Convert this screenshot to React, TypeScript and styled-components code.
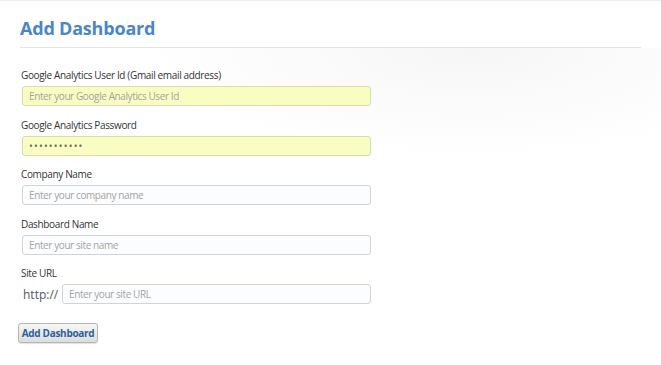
import React from 'react';
import styled, { createGlobalStyle } from 'styled-components';

const GlobalStyle = createGlobalStyle`
  html, body {
    margin: 0;
    padding: 0;
    background: #ffffff;
  }
  body {
    font-family: "Open Sans", "DejaVu Sans", sans-serif;
  }
`;

const Page = styled.div`
  width: 661px;
  height: 365px;
  box-sizing: border-box;
  border-top: 1px solid #ececec;
  padding: 0 20px;
  overflow: hidden;
`;

const Header = styled.div`
  height: 47px;
  box-sizing: border-box;
  padding-top: 15px;
  border-bottom: 1px solid #e4e4e4;
`;

const Title = styled.h1`
  margin: 0;
  font-family: "Open Sans", sans-serif;
  font-size: 18px;
  line-height: 24px;
  font-weight: 700;
  color: #4a86c6;
  letter-spacing: -0.2px;
`;

const Body = styled.form`
  margin: 0 -20px;
  padding: 18px 20px 0;
  background: radial-gradient(ellipse 330px 110px at 470px 0, rgba(0, 0, 0, 0.035), rgba(0, 0, 0, 0) 100%);
`;

const Field = styled.div`
  margin-bottom: 9.5px;
`;

const Label = styled.label`
  display: block;
  margin: 0 0 3px 1px;
  padding-top: 2px;
  font-size: 10px;
  line-height: 15px;
  letter-spacing: -0.35px;
  color: #333333;
`;

const Input = styled.input<{ $highlight?: boolean; $width?: number }>`
  display: block;
  box-sizing: border-box;
  width: ${p => p.$width ?? 349}px;
  height: 20px;
  margin-left: 2px;
  padding: 0 6px;
  border: 1px solid ${p => (p.$highlight ? '#d8dcb0' : '#cfd4db')};
  border-radius: 3px;
  background: ${p => (p.$highlight ? '#fafdc2' : '#fcfdfe')};
  font-family: "Open Sans", sans-serif;
  font-size: 10px;
  letter-spacing: -0.4px;
  color: #555;
  outline: none;

  &::placeholder {
    color: #a3a3a3;
  }

  &[type='password'] {
    font-size: 10px;
    letter-spacing: 1.2px;
    color: #666;
  }
`;

const UrlRow = styled.div`
  display: flex;
  align-items: center;
`;

const Prefix = styled.span`
  width: 40px;
  box-sizing: border-box;
  padding-left: 3px;
  font-size: 12px;
  color: #555555;
`;

const Button = styled.button`
  display: block;
  margin-top: 19px;
  margin-left: -2px;
  height: 20px;
  width: 80px;
  padding: 0;
  border: 1px solid #b5b5b5;
  border-radius: 3px;
  background: linear-gradient(#f7f7f7, #dcdcdc);
  box-shadow: 0 1px 1px rgba(0, 0, 0, 0.12);
  font-family: "Open Sans", sans-serif;
  font-size: 10px;
  font-weight: 700;
  letter-spacing: -0.3px;
  color: #2c5f9e;
  cursor: pointer;
`;

const App: React.FC = () => {
  return (
    <Page>
      <GlobalStyle />
      <Header>
        <Title>Add Dashboard</Title>
      </Header>
      <Body onSubmit={e => e.preventDefault()}>
        <Field>
          <Label>Google Analytics User Id (Gmail email address)</Label>
          <Input $highlight placeholder="Enter your Google Analytics User Id" />
        </Field>
        <Field>
          <Label>Google Analytics Password</Label>
          <Input $highlight type="password" defaultValue="passwordxyz" />
        </Field>
        <Field>
          <Label>Company Name</Label>
          <Input placeholder="Enter your company name" />
        </Field>
        <Field>
          <Label>Dashboard Name</Label>
          <Input placeholder="Enter your site name" />
        </Field>
        <Field>
          <Label>Site URL</Label>
          <UrlRow>
            <Prefix>http://</Prefix>
            <Input $width={309} placeholder="Enter your site URL" />
          </UrlRow>
        </Field>
        <Button type="submit">Add Dashboard</Button>
      </Body>
    </Page>
  );
};

export default App;
